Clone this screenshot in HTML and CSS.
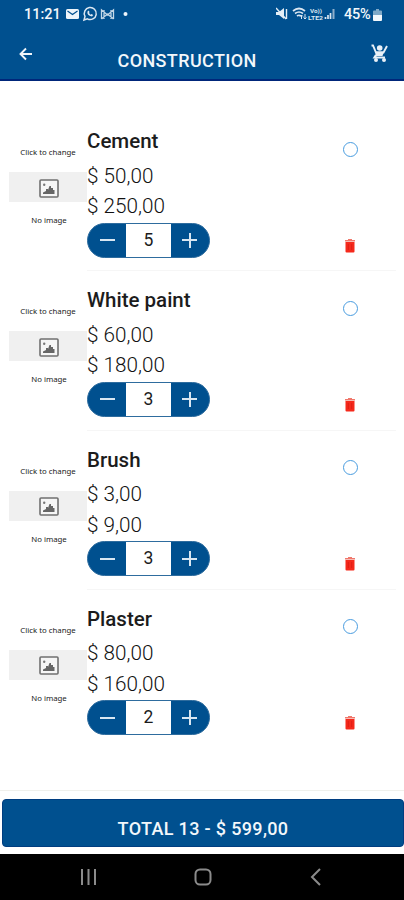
FILE: index.html
```
<!DOCTYPE html>
<html lang="en">
<head>
<meta charset="utf-8">
<title>Construction</title>
<link rel="stylesheet" href="styles.css">
</head>
<body>
<svg class="defs" width="0" height="0">
  <symbol id="picture" viewBox="0 0 20 19"><rect x="1" y="1" width="18" height="17" rx="1" fill="#f6f6f6" stroke="#707070" stroke-width="1.600"/><path d="M4 15v-1.500l3-1.500V10h2v1l1.500-4h1.500v2h2v2h1.500v4z" fill="#666"/><circle cx="5.200" cy="5.800" r="1.200" fill="#777"/></symbol>
  <symbol id="trash" viewBox="0 0 12 15"><path d="M4 1h4v1h3v1.500H1V2h3z" fill="#f0786c"/><path d="M1.500 4h9v9.500q0 1-1 1h-7q-1 0-1-1z" fill="#f5291b"/><path d="M4.300 6v6M7.700 6v6" stroke="#d91c14" stroke-width=".8"/></symbol>
</svg>
<header class="header">
  <div class="status">
    <span class="clock">11:21</span>
    <svg class="notices" width="63" height="16" viewBox="0 0 63 16">
      <rect x="0" y="3" width="13" height="10" rx="1.500" fill="#eef5fb"/><path d="M1.500 5l5 3.500 5-3.500" fill="none" stroke="#00508f" stroke-width="1.200"/>
      <path d="M18 14l1-3.600a6 6 0 1 1 2.400 2.400z" fill="none" stroke="#dbe7f2" stroke-width="1.500"/><path d="M21.500 5.500q-1 4 4.500 5l1.200-1.500-1.700-1-1 .7-1.500-1.700.5-1-.8-1.500z" fill="#dbe7f2"/>
      <path d="M35.500 13V4l6 5 6-5v9M35.500 13l6-5 6 5M38 4v9M45 4v9" fill="none" stroke="#c4d8e8" stroke-width="1.300"/>
      <circle cx="59.500" cy="8" r="2" fill="#eef5fb"/>
    </svg>
    <svg class="signals" width="64" height="16" viewBox="0 0 64 16">
      <path d="M0 6h3l5-4v11l-5-4H0z" fill="#e4eef6"/><path d="M0 2l10 11M10.500 3v10" stroke="#e4eef6" stroke-width="1.400"/>
      <path d="M17 5q6-5 12 0M19 7.500q4-3 8 0M21 10q2-1.500 4 0" fill="none" stroke="#dbe7f2" stroke-width="1.700"/><path d="M25.500 13V9m-1.500 1.500L25.500 9 27 10.500M29 8v5m-1.500-1.500L29 13l1.500-1.500" fill="none" stroke="#dbe7f2"/>
      <text class="net" x="34" y="7" textLength="12" lengthAdjust="spacingAndGlyphs">Vo))</text><text class="net" x="32" y="13.500" textLength="15" lengthAdjust="spacingAndGlyphs">LTE2</text>
      <path d="M49.500 11v2M52 9v4M54.500 7v6" stroke="#dbe7f2" stroke-width="1.700"/><path d="M57.500 3v10" stroke="#8eafcb" stroke-width="2"/>
    </svg>
    <span class="percent">45%</span>
    <svg class="battery" width="9" height="14" viewBox="0 0 9 14"><path d="M3 1h3v1.500h2q1 0 1 1V7H0V3.500q0-1 1-1h2z" fill="#7fa9c8"/><path d="M0 7h9v5q0 1-1 1H1q-1 0-1-1z" fill="#f3f8fc"/></svg>
  </div>
  <div class="bar">
    <svg class="back" width="14" height="14" viewBox="0 0 14 14"><path d="M13 7H2M7 1.500L1.500 7 7 12.500" fill="none" stroke="#f0f5fa" stroke-width="1.900"/></svg>
    <h1 class="title">CONSTRUCTION</h1>
    <svg class="cart" width="17" height="19" viewBox="0 0 17 19"><path d="M.5 1.500h1.500l3 7h7.500L16 2" fill="none" stroke="#e8f0f7" stroke-width="1.900"/><circle cx="8.700" cy="4" r="2.800" fill="#e8f0f7"/><path d="M4.500 7.500h8.500l-1.500 4.500h-7z" fill="#e8f0f7"/><path d="M5 11l-1.500 2.500h10.500" fill="none" stroke="#e8f0f7" stroke-width="2.200"/><circle cx="5" cy="16" r="2" fill="#e8f0f7"/><circle cx="13" cy="16" r="2" fill="#e8f0f7"/></svg>
  </div>
</header>
<main class="list">
  <article class="item">
    <div class="thumb"><span class="hint">Click to change</span><div class="frame"><svg width="20" height="19"><use href="#picture"/></svg></div><span class="none">No image</span></div>
    <div class="info"><h2 class="name">Cement</h2><p class="price">$ 50,00</p><p class="price">$ 250,00</p><div class="stepper"><span class="minus"></span><span class="qty">5</span><span class="plus"></span></div></div>
    <div class="actions"><span class="radio"></span><svg width="12" height="15"><use href="#trash"/></svg></div>
  </article>
  <article class="item">
    <div class="thumb"><span class="hint">Click to change</span><div class="frame"><svg width="20" height="19"><use href="#picture"/></svg></div><span class="none">No image</span></div>
    <div class="info"><h2 class="name">White paint</h2><p class="price">$ 60,00</p><p class="price">$ 180,00</p><div class="stepper"><span class="minus"></span><span class="qty">3</span><span class="plus"></span></div></div>
    <div class="actions"><span class="radio"></span><svg width="12" height="15"><use href="#trash"/></svg></div>
  </article>
  <article class="item">
    <div class="thumb"><span class="hint">Click to change</span><div class="frame"><svg width="20" height="19"><use href="#picture"/></svg></div><span class="none">No image</span></div>
    <div class="info"><h2 class="name">Brush</h2><p class="price">$ 3,00</p><p class="price">$ 9,00</p><div class="stepper"><span class="minus"></span><span class="qty">3</span><span class="plus"></span></div></div>
    <div class="actions"><span class="radio"></span><svg width="12" height="15"><use href="#trash"/></svg></div>
  </article>
  <article class="item">
    <div class="thumb"><span class="hint">Click to change</span><div class="frame"><svg width="20" height="19"><use href="#picture"/></svg></div><span class="none">No image</span></div>
    <div class="info"><h2 class="name">Plaster</h2><p class="price">$ 80,00</p><p class="price">$ 160,00</p><div class="stepper"><span class="minus"></span><span class="qty">2</span><span class="plus"></span></div></div>
    <div class="actions"><span class="radio"></span><svg width="12" height="15"><use href="#trash"/></svg></div>
  </article>
</main>
<footer class="footer"><div class="total">TOTAL 13 - $ 599,00</div></footer>
<nav class="nav">
  <svg width="18" height="18" viewBox="0 0 18 18"><path d="M2 1v16M8.500 1v16M15 1v16" stroke="#8b8b8b" stroke-width="2"/></svg>
  <svg width="18" height="18" viewBox="0 0 18 18"><rect x="1.500" y="1.500" width="15" height="15" rx="4.500" fill="none" stroke="#8b8b8b" stroke-width="2"/></svg>
  <svg width="18" height="18" viewBox="0 0 18 18"><path d="M13 1L5 9l8 8" fill="none" stroke="#8b8b8b" stroke-width="2"/></svg>
</nav>
</body>
</html>
```
FILE: styles.css
```
* { box-sizing: border-box; }
body { margin: 0; width: 404px; height: 900px; display: flex; flex-direction: column; overflow: hidden; background: #fff; font-family: Roboto, sans-serif; color: #1c1c1c; }
h1, h2, p { margin: 0; font-weight: inherit; }
svg { display: block; flex: none; }
.defs { position: absolute; }

.header { height: 81px; background: #00508f; border-bottom: 2px solid #00267a; color: #f2f7fb; }
.status { height: 28px; padding-left: 24px; display: flex; align-items: center; }
.clock { width: 42px; font-size: 14.500px; font-weight: 500; white-space: nowrap; }
.signals { margin-left: 147px; }
.net { font: 700 5.500px Roboto, sans-serif; fill: #dbe7f2; }
.percent { width: 29px; margin-left: 4px; font-size: 14.500px; font-weight: 500; letter-spacing: -.2px; }
.battery { margin-top: 1px; }
.bar { height: 51px; padding: 0 16px 0 19px; display: flex; align-items: flex-start; }
.back { margin-top: 19px; }
.title { margin: 22px 0 0 84.500px; font-size: 18px; line-height: 22px; font-weight: 500; letter-spacing: .38px; }
.cart { margin: 16px 0 0 auto; }

.list { height: 709px; padding-top: 31px; }
.item { height: 159.300px; padding-left: 9px; display: flex; }
.thumb { width: 78px; display: flex; flex-direction: column; align-items: center; font: 7.800px/10px "Noto Sans", sans-serif; color: #222; }
.hint { margin-top: 35px; }
.frame { width: 78px; height: 30px; margin: 15px 0 13px; padding: 2px 0 0 2px; background: #f0f0f0; display: flex; align-items: center; justify-content: center; }
.none { margin-left: 2px; }
.info { width: 240px; border-bottom: 1px solid #f6f6f6; }
.item:last-child .info, .item:last-child .actions { border-color: transparent; }
.name { height: 27px; margin-top: 16px; font-size: 20.500px; line-height: 27px; font-weight: 500; }
.price { height: 30.500px; font-size: 20.700px; line-height: 30.500px; font-weight: 300; color: #111; }
.price:nth-child(2) { margin-top: 5.500px; }
.stepper { width: 123px; height: 35px; margin-top: 1px; display: grid; grid-template-columns: 38px 45px 40px; border: 1px solid #2e6c9e; border-radius: 18px; overflow: hidden; background: #00508f; }
.minus { background: linear-gradient(#d9e7f2, #d9e7f2) center / 15px 2px no-repeat; }
.plus { background: linear-gradient(#d9e7f2, #d9e7f2) 11px 50% / 15px 2px no-repeat, linear-gradient(#d9e7f2, #d9e7f2) 17.500px 50% / 2px 15px no-repeat; }
.qty { background: #fff; text-align: center; font-size: 17.500px; line-height: 33px; }
.actions { width: 69px; padding: 29.500px 23px 0 0; border-bottom: 1px solid #f6f6f6; display: flex; flex-direction: column; align-items: center; }
.radio { width: 15px; height: 15px; margin-bottom: 81px; border: 1.500px solid #4a9de0; border-radius: 50%; }

.footer { height: 64px; padding: 8px 0 8px 2px; border-top: 1px solid #f0f0ec; }
.total { height: 48px; padding-top: 18px; background: #00508f; border: 1px solid #003d80; border-radius: 4px; text-align: center; font-size: 18px; line-height: 22px; font-weight: 500; letter-spacing: .34px; color: #f2f7fb; }
.nav { height: 46px; padding: 0 79px 0 80px; background: #000; display: flex; align-items: center; justify-content: space-between; }
```
